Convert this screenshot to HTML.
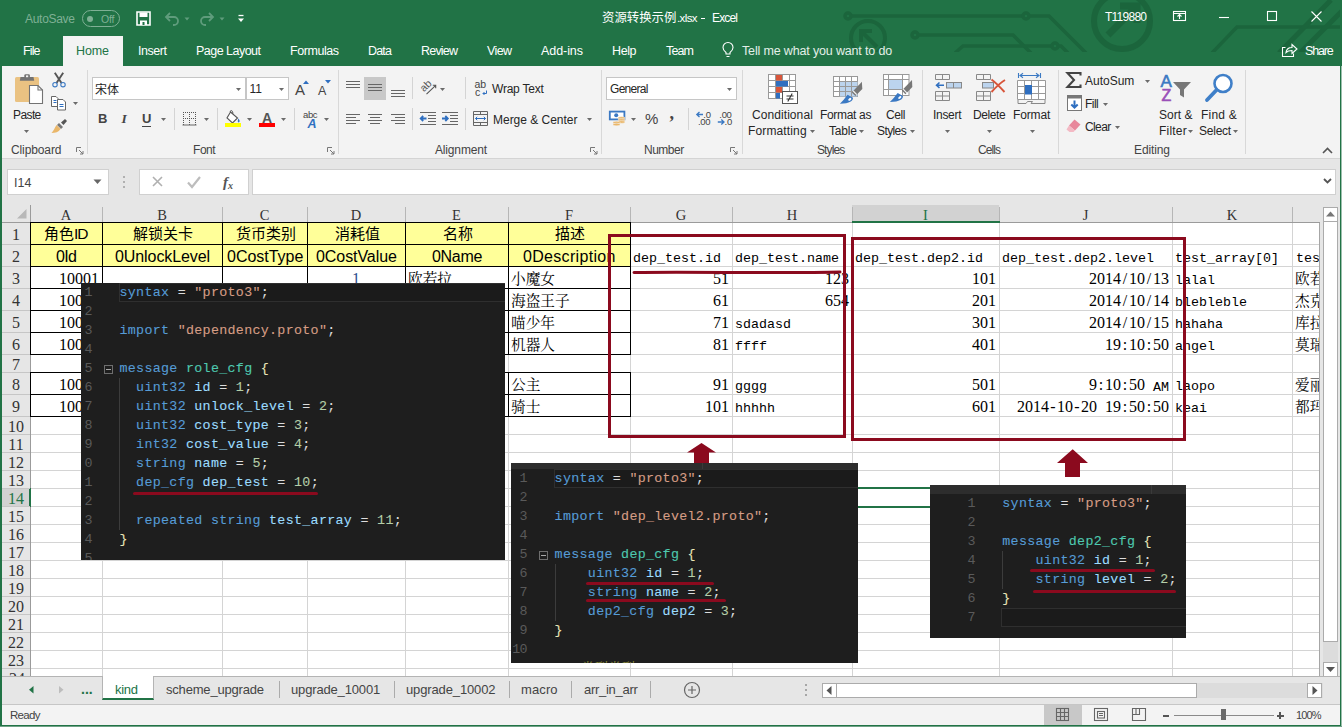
<!DOCTYPE html>
<html><head><meta charset="utf-8"><title>Excel</title><style>
html,body{margin:0;padding:0;}
body{width:1342px;height:727px;overflow:hidden;background:#e6e6e6;position:relative;font-family:"Liberation Sans",sans-serif;font-size:12px;color:#262626;}
body div{position:absolute;box-sizing:border-box;white-space:pre;}
svg{position:absolute;overflow:visible;}
.t{font-family:"Liberation Sans",sans-serif;font-size:12px;color:#262626;}
.w{font-family:"Liberation Sans",sans-serif;font-size:12px;color:#fff;}
.m{font-family:"Liberation Mono",monospace;font-size:13.333px;color:#000;}
.h{font-family:"Liberation Mono",monospace;font-size:13.33px;color:#444;}
.hs{font-family:"Liberation Serif",serif;font-size:16px;color:#333;}
.hc{font-family:"Liberation Serif",serif;font-size:14.5px;color:#333;}
.ds{font-family:"Liberation Serif",serif;font-size:16px;color:#000;}
.d{display:inline-block;width:8px;text-align:center;font-style:normal;}
.y{font-family:"Liberation Sans",sans-serif;font-size:16px;color:#000;text-align:center;}
.c{font-family:"Liberation Mono",monospace;font-size:13.333px;letter-spacing:0.31px;color:#dcdcdc;-webkit-text-stroke:0.1px currentColor;}
.c i{-webkit-text-stroke:0.1px currentColor;}
.c i{font-style:normal}
.k{color:#569cd6}.v{color:#9cdcfe}.n{color:#b5cea8}.s{color:#d69d85}.ty{color:#4ec9b0}.p{color:#dcdcdc}.b{color:#e8e4b8}
.ln{font-family:"Liberation Mono",monospace;font-size:13.333px;color:#5a5a5a;text-align:right;letter-spacing:-0.6px;}
</style></head><body>
<div style="left:0px;top:0px;width:1342px;height:66px;background:#217346;"></div>
<svg style="left:0;top:0;overflow:hidden" width="1342" height="52" viewBox="0 0 1342 52" fill="none" stroke="#1b653c" stroke-width="3.500">
<circle cx="848" cy="16" r="3"/><path d="M851 16 H1023"/><circle cx="1026" cy="16" r="3"/><path d="M1029 16 H1049 L1086 53"/>
<circle cx="915" cy="35" r="3"/><path d="M918 35 H1013 L1031 53"/>
<path d="M955 53 L963 46 H1052"/><circle cx="1055" cy="46" r="3"/><path d="M1058 46 H1061 L1068 53"/>
<circle cx="868" cy="38" r="17" stroke-width="4"/><path d="M877 47 L861 31 M861 42 V31 H872" stroke-width="4"/>
<circle cx="1122" cy="21" r="28" stroke-width="6"/><path d="M1108 35 L1134 9 M1120 6 H1137 V23" stroke-width="7"/>
<path d="M1212 53 L1237 27 H1342"/><path d="M1279 53 L1331 0" stroke-width="5"/><path d="M1300 53 L1342 11" stroke-width="5"/>
</svg>
<svg style="left:25.00px;top:8.50px" width="53.0" height="20"><text x="0" y="14.16" font-family="Liberation Sans, sans-serif" font-size="12" fill="#7fb095" textLength="50.0" lengthAdjust="spacing">AutoSave</text></svg>
<div style="left:82px;top:10px;width:38px;height:17px;border:1px solid #7fb095;border-radius:9px;"></div>
<div style="left:87px;top:15.5px;width:6px;height:6px;background:#7fb095;border-radius:3px;"></div>
<svg style="left:100.60px;top:8.50px" width="16.4" height="20"><text x="0" y="13.64" font-family="Liberation Sans, sans-serif" font-size="10.5" fill="#7fb095" textLength="13.4" lengthAdjust="spacing">Off</text></svg>
<svg style="left:136px;top:11px" width="15" height="15" viewBox="0 0 15 15"><path d="M1 1h13v13h-13z" fill="none" stroke="#fff" stroke-width="1.6"/><rect x="3.5" y="1.5" width="8" height="4.5" fill="#fff"/><rect x="4" y="9.5" width="7" height="4.5" fill="#fff"/><rect x="6.500" y="11" width="2" height="3" fill="#217346"/></svg>
<svg style="left:164px;top:11px" width="90" height="16" viewBox="0 0 90 16" fill="none" stroke="#5f9c7c" stroke-width="1.8">
<path d="M6 2 L2 6 L6 10 M2.5 6 H10 a4 4 0 0 1 0 8 H9"/>
<path d="M45 2 L49 6 L45 10 M48.500 6 H41 a4 4 0 0 0 0 8 H42"/>
<path d="M20.500 6.500 l2.500 3 l2.500 -3z" fill="#5f9c7c" stroke="none"/>
<path d="M55.500 6.500 l2.500 3 l2.500 -3z" fill="#5f9c7c" stroke="none"/>
<path d="M74.500 4.500 h5" stroke="#fff" stroke-width="1.3"/><path d="M74 7.500 l3 3.500 l3 -3.500z" fill="#fff" stroke="none"/>
</svg>
<svg style="left:601.70px;top:11.30px;" width="75.4" height="14.3" fill="#fff"><text x="0" y="10.91" font-family="Liberation Sans, Noto Sans CJK SC, sans-serif" font-size="12.4" fill="#ffffff">资源转换示例</text></svg>
<svg style="left:676.50px;top:7.50px" width="23.5" height="20"><text x="0" y="13.98" font-family="Liberation Sans, sans-serif" font-size="11.5" fill="#ffffff" textLength="20.5" lengthAdjust="spacing">.xlsx</text></svg>
<div style="left:701px;top:18px;width:4px;height:1px;background:#fff;"></div>
<svg style="left:712.30px;top:7.50px" width="28.9" height="20"><text x="0" y="14.16" font-family="Liberation Sans, sans-serif" font-size="12" fill="#ffffff" textLength="25.9" lengthAdjust="spacing">Excel</text></svg>
<svg style="left:1105.00px;top:7.00px" width="45.0" height="20"><text x="0" y="14.16" font-family="Liberation Sans, sans-serif" font-size="12" fill="#ffffff" textLength="42.0" lengthAdjust="spacing">T119880</text></svg>
<svg style="left:1170px;top:8px" width="160" height="18" viewBox="0 0 160 18" fill="none" stroke="#fff" stroke-width="1.1">
<rect x="3.5" y="3.500" width="12" height="9"/><path d="M3.500 5.500 h12 M9.500 11 v-4 M7.500 8.500 l2 -2 l2 2"/>
<path d="M49 9.500 h10"/>
<rect x="97.500" y="3.500" width="9" height="9"/>
<path d="M141.500 3.500 l10 10 M151.500 3.500 l-10 10"/>
</svg>
<div style="left:63px;top:36px;width:60px;height:30px;background:#f3f3f3;"></div>
<svg style="left:22.50px;top:40.50px" width="20.5" height="20"><text x="0" y="14.33" font-family="Liberation Sans, sans-serif" font-size="12.5" fill="#ffffff" textLength="17.5" lengthAdjust="spacing">File</text></svg>
<svg style="left:76.00px;top:40.50px" width="36.0" height="20"><text x="0" y="14.33" font-family="Liberation Sans, sans-serif" font-size="12.5" fill="#217346" textLength="33.0" lengthAdjust="spacing">Home</text></svg>
<svg style="left:138.00px;top:40.50px" width="32.0" height="20"><text x="0" y="14.33" font-family="Liberation Sans, sans-serif" font-size="12.5" fill="#ffffff" textLength="29.0" lengthAdjust="spacing">Insert</text></svg>
<svg style="left:196.00px;top:40.50px" width="68.0" height="20"><text x="0" y="14.33" font-family="Liberation Sans, sans-serif" font-size="12.5" fill="#ffffff" textLength="65.0" lengthAdjust="spacing">Page Layout</text></svg>
<svg style="left:290.00px;top:40.50px" width="52.0" height="20"><text x="0" y="14.33" font-family="Liberation Sans, sans-serif" font-size="12.5" fill="#ffffff" textLength="49.0" lengthAdjust="spacing">Formulas</text></svg>
<svg style="left:368.00px;top:40.50px" width="27.0" height="20"><text x="0" y="14.33" font-family="Liberation Sans, sans-serif" font-size="12.5" fill="#ffffff" textLength="24.0" lengthAdjust="spacing">Data</text></svg>
<svg style="left:421.00px;top:40.50px" width="40.0" height="20"><text x="0" y="14.33" font-family="Liberation Sans, sans-serif" font-size="12.5" fill="#ffffff" textLength="37.0" lengthAdjust="spacing">Review</text></svg>
<svg style="left:487.00px;top:40.50px" width="28.0" height="20"><text x="0" y="14.33" font-family="Liberation Sans, sans-serif" font-size="12.5" fill="#ffffff" textLength="25.0" lengthAdjust="spacing">View</text></svg>
<svg style="left:541.00px;top:40.50px" width="45.0" height="20"><text x="0" y="14.33" font-family="Liberation Sans, sans-serif" font-size="12.5" fill="#ffffff" textLength="42.0" lengthAdjust="spacing">Add-ins</text></svg>
<svg style="left:612.00px;top:40.50px" width="27.5" height="20"><text x="0" y="14.33" font-family="Liberation Sans, sans-serif" font-size="12.5" fill="#ffffff" textLength="24.5" lengthAdjust="spacing">Help</text></svg>
<svg style="left:666.40px;top:40.50px" width="31.0" height="20"><text x="0" y="14.33" font-family="Liberation Sans, sans-serif" font-size="12.5" fill="#ffffff" textLength="28.0" lengthAdjust="spacing">Team</text></svg>
<svg style="left:722px;top:42px" width="12" height="17" viewBox="0 0 12 17" fill="none" stroke="#fff" stroke-width="1.1"><path d="M4 12 v-1.500 c-2 -1.500 -3 -3 -3 -5 a5 5 0 0 1 10 0 c0 2 -1 3.500 -3 5 v1.500z M4.500 14.500 h3"/></svg>
<svg style="left:741.60px;top:40.50px" width="153.2" height="20"><text x="0" y="14.33" font-family="Liberation Sans, sans-serif" font-size="12.5" fill="#e3efe8" textLength="150.2" lengthAdjust="spacing">Tell me what you want to do</text></svg>
<svg style="left:1281px;top:42px" width="18" height="16" viewBox="0 0 18 16" fill="none" stroke="#fff" stroke-width="1.1"><path d="M4.500 5.500 h-3 v9 h11 v-3 M5 10.500 c0.500 -3.500 3 -5 6 -5 v-3 l5 4.500 l-5 4.500 v-3 c-3 0 -4.500 0.500 -6 2z"/></svg>
<svg style="left:1305.20px;top:40.50px" width="31.8" height="20"><text x="0" y="14.33" font-family="Liberation Sans, sans-serif" font-size="12.5" fill="#ffffff" textLength="28.8" lengthAdjust="spacing">Share</text></svg>
<div style="left:0px;top:66px;width:1342px;height:93px;background:#f3f3f3;border-bottom:1px solid #d4d4d4;"></div>
<div style="left:7px;top:169px;width:102px;height:26px;background:#fff;border:1px solid #d0d0d0;"></div>
<div class="t" style="left:14px;top:174.5px;height:16px;line-height:16px;color:#444;font-size:12.5px;">I14</div>
<svg style="left:93px;top:179px" width="9" height="6"><path d="M0.500 0.500 h8 l-4 4.500z" fill="#666"/></svg>
<div style="left:123px;top:176px;width:2px;height:2px;background:#b0b0b0;"></div>
<div style="left:123px;top:181px;width:2px;height:2px;background:#b0b0b0;"></div>
<div style="left:123px;top:186px;width:2px;height:2px;background:#b0b0b0;"></div>
<div style="left:139px;top:169px;width:110px;height:26px;background:#fff;border:1px solid #d0d0d0;"></div>
<svg style="left:139px;top:169px" width="109" height="25" fill="none"><path d="M14 8 l9 9 M23 8 l-9 9" stroke="#b0b0b0" stroke-width="1.6"/><path d="M49 13.500 l4 4.500 l8 -10" stroke="#bdbdbd" stroke-width="2.200"/></svg>
<div class="t" style="left:223px;top:174.0px;height:16px;line-height:16px;"><i style="font-family:'Liberation Serif',serif;font-size:15px;font-weight:bold;color:#555">f</i><i style="font-family:'Liberation Serif',serif;font-size:10px;font-weight:bold;color:#555;position:relative;top:2px">x</i></div>
<div style="left:252px;top:169px;width:1084px;height:26px;background:#fff;border:1px solid #d0d0d0;"></div>
<svg style="left:1323px;top:178px" width="9" height="7" fill="none"><path d="M1 1 l3.500 3.500 l3.500 -3.500" stroke="#555" stroke-width="1.800"/></svg>
<div style="left:0px;top:0px;width:2px;height:727px;background:#217346;z-index:50;"></div>
<div style="left:1340px;top:0px;width:2px;height:727px;background:#217346;z-index:50;"></div>
<div style="left:1341px;top:66px;width:1px;height:661px;background:#9dbfad;z-index:51;"></div>
<div style="left:0px;top:725px;width:1342px;height:2px;background:#217346;z-index:50;"></div>
<div style="left:0px;top:726px;width:1342px;height:1px;background:#6fa287;z-index:51;"></div>
<div style="left:87px;top:70px;width:1px;height:84px;background:#d8d8d8;"></div>
<div style="left:338px;top:70px;width:1px;height:84px;background:#d8d8d8;"></div>
<div style="left:601px;top:70px;width:1px;height:84px;background:#d8d8d8;"></div>
<div style="left:742px;top:70px;width:1px;height:84px;background:#d8d8d8;"></div>
<div style="left:922px;top:70px;width:1px;height:84px;background:#d8d8d8;"></div>
<div style="left:1058px;top:70px;width:1px;height:84px;background:#d8d8d8;"></div>
<div style="left:1245px;top:70px;width:1px;height:84px;background:#d8d8d8;"></div>
<svg style="left:11.00px;top:140.00px" width="53.5" height="20"><text x="0" y="14.16" font-family="Liberation Sans, sans-serif" font-size="12" fill="#444" textLength="50.5" lengthAdjust="spacing">Clipboard</text></svg>
<svg style="left:76.0px;top:147.0px" width="8" height="8" fill="none" stroke="#777" stroke-width="1"><path d="M0.500 5 v-4.500 h4.500"/><path d="M3 3 l4 4 M7 4 v3 h-3"/></svg>
<svg style="left:192.80px;top:140.00px" width="25.7" height="20"><text x="0" y="14.16" font-family="Liberation Sans, sans-serif" font-size="12" fill="#444" textLength="22.7" lengthAdjust="spacing">Font</text></svg>
<svg style="left:326.5px;top:147.0px" width="8" height="8" fill="none" stroke="#777" stroke-width="1"><path d="M0.500 5 v-4.500 h4.500"/><path d="M3 3 l4 4 M7 4 v3 h-3"/></svg>
<svg style="left:435.40px;top:140.00px" width="55.1" height="20"><text x="0" y="14.16" font-family="Liberation Sans, sans-serif" font-size="12" fill="#444" textLength="52.1" lengthAdjust="spacing">Alignment</text></svg>
<svg style="left:590.0px;top:147.0px" width="8" height="8" fill="none" stroke="#777" stroke-width="1"><path d="M0.500 5 v-4.500 h4.500"/><path d="M3 3 l4 4 M7 4 v3 h-3"/></svg>
<svg style="left:643.80px;top:140.00px" width="43.2" height="20"><text x="0" y="14.16" font-family="Liberation Sans, sans-serif" font-size="12" fill="#444" textLength="40.2" lengthAdjust="spacing">Number</text></svg>
<svg style="left:730.0px;top:147.0px" width="8" height="8" fill="none" stroke="#777" stroke-width="1"><path d="M0.500 5 v-4.500 h4.500"/><path d="M3 3 l4 4 M7 4 v3 h-3"/></svg>
<svg style="left:817.30px;top:140.00px" width="31.2" height="20"><text x="0" y="14.16" font-family="Liberation Sans, sans-serif" font-size="12" fill="#444" textLength="28.2" lengthAdjust="spacing">Styles</text></svg>
<svg style="left:978.40px;top:140.00px" width="26.1" height="20"><text x="0" y="14.16" font-family="Liberation Sans, sans-serif" font-size="12" fill="#444" textLength="23.1" lengthAdjust="spacing">Cells</text></svg>
<svg style="left:1133.60px;top:140.00px" width="39.0" height="20"><text x="0" y="14.16" font-family="Liberation Sans, sans-serif" font-size="12" fill="#444" textLength="36.0" lengthAdjust="spacing">Editing</text></svg>
<svg style="left:1322px;top:147px" width="11" height="7" fill="none" stroke="#555" stroke-width="1.600"><path d="M1 6 l4.500 -4.500 l4.500 4.500"/></svg>
<svg style="left:14px;top:73px" width="30" height="32" viewBox="0 0 30 32">
<rect x="1" y="4" width="24" height="25" rx="1.500" fill="#eac282"/>
<path d="M6.500 4 h13 l0.700 3.800 h-14.400z" fill="#737373"/><rect x="10.300" y="1.200" width="5.600" height="4" rx="1.200" fill="#737373"/><rect x="12" y="2.400" width="2.200" height="1.800" fill="#f3f3f3"/>
<path d="M15.500 12.500 h8.500 l4.500 4.500 v13.500 h-13z" fill="#fff" stroke="#737373" stroke-width="1.100"/><path d="M24 12.500 v4.500 h4.500" fill="none" stroke="#737373" stroke-width="1.100"/>
</svg>
<svg style="left:13.00px;top:105.00px" width="31.3" height="20"><text x="0" y="14.16" font-family="Liberation Sans, sans-serif" font-size="12" fill="#262626" textLength="28.3" lengthAdjust="spacing">Paste</text></svg>
<svg style="left:24.3px;top:129.5px" width="5" height="3"><path d="M0 0 h5 l-2.500 3z" fill="#6a6a6a"/></svg>
<svg style="left:51px;top:72px" width="16" height="17" viewBox="0 0 16 17" fill="none">
<path d="M3.800 0.800 L10.500 11 M12.200 0.800 L5.500 11" stroke="#555" stroke-width="1.900"/>
<circle cx="4" cy="12.700" r="2.200" stroke="#3b79c3" stroke-width="1.100"/><circle cx="12" cy="12.700" r="2.200" stroke="#3b79c3" stroke-width="1.100"/></svg>
<svg style="left:51px;top:96px" width="16" height="15" viewBox="0 0 16 15" fill="#fff" stroke="#666" stroke-width="1">
<path d="M0.500 0.500 h4.500 l2 2 v8 h-6.500z"/><path d="M2.500 4.500 h3 M2.500 6.500 h3" stroke="#2f6fc0"/><path d="M6.500 3.500 h5.500 l2.500 2.500 v8 h-8z"/><path d="M8.500 8.500 h4 M8.500 10.500 h4" stroke="#2f6fc0"/></svg>
<svg style="left:73.1px;top:102.0px" width="5" height="3"><path d="M0 0 h5 l-2.500 3z" fill="#6a6a6a"/></svg>
<svg style="left:51px;top:118px" width="17" height="16" viewBox="0 0 17 16">
<path d="M10 4.500 l4 -3.500 l2 2 l-3.500 4z" fill="#555"/><path d="M8 5 l4 4 l-2 2 l-4 -4z" fill="#777"/>
<path d="M5.500 7 l4 4 c-2 3 -5 4 -9 4 c2 -2 3 -5 5 -8z" fill="#eab76a"/></svg>
<div style="left:92px;top:77px;width:154px;height:23px;background:#fff;border:1px solid #c6c6c6;"></div>
<svg style="left:95.00px;top:83.00px;" width="25.0" height="13.8" fill="#262626"><text x="0" y="10.56" font-family="Liberation Sans, Noto Sans CJK SC, sans-serif" font-size="12" fill="#262626">宋体</text></svg>
<svg style="left:235.5px;top:87.5px" width="5" height="3"><path d="M0 0 h5 l-2.500 3z" fill="#6a6a6a"/></svg>
<div style="left:245.5px;top:77px;width:43px;height:23px;background:#fff;border:1px solid #c6c6c6;"></div>
<div class="t" style="left:249.5px;top:81.0px;height:16px;line-height:16px;font-size:12px;">11</div>
<svg style="left:278.5px;top:87.5px" width="5" height="3"><path d="M0 0 h5 l-2.500 3z" fill="#6a6a6a"/></svg>
<div class="t" style="left:295px;top:81.5px;height:16px;line-height:16px;font-size:15px;color:#444;">A</div>
<svg style="left:303px;top:80px" width="6" height="4"><path d="M0 4 h6 l-3 -3.500z" fill="#2f6fc0"/></svg>
<div class="t" style="left:318px;top:82.5px;height:16px;line-height:16px;font-size:12.500px;color:#444;">A</div>
<svg style="left:325px;top:80px" width="6" height="4"><path d="M0 0 h6 l-3 3.500z" fill="#2f6fc0"/></svg>
<div class="t" style="left:98px;top:111.0px;height:16px;line-height:16px;font-size:13px;font-weight:bold;color:#444;">B</div>
<div class="t" style="left:121.5px;top:111.0px;height:16px;line-height:16px;font-size:13.500px;font-style:italic;font-weight:bold;font-family:'Liberation Serif',serif;color:#444;">I</div>
<div class="t" style="left:142px;top:110.5px;height:16px;line-height:16px;font-size:13px;font-weight:bold;color:#444;">U</div>
<div style="left:142px;top:125.5px;width:9px;height:1.2px;background:#444;"></div>
<svg style="left:160.5px;top:118.0px" width="5" height="3"><path d="M0 0 h5 l-2.500 3z" fill="#6a6a6a"/></svg>
<div style="left:174px;top:108px;width:1px;height:22px;background:#d4d4d4;"></div>
<svg style="left:182px;top:111px" width="15" height="15" viewBox="0 0 15 15" fill="none" stroke="#555" stroke-width="1" stroke-dasharray="1 1"><path d="M1 1.500 h13 M1 7.500 h13 M1.500 1 v13 M7.500 1 v13 M13.500 1 v13"/><path d="M0.500 14 h14" stroke-dasharray="none" stroke="#666"/></svg>
<svg style="left:204.0px;top:118.0px" width="5" height="3"><path d="M0 0 h5 l-2.500 3z" fill="#6a6a6a"/></svg>
<div style="left:217px;top:108px;width:1px;height:22px;background:#d4d4d4;"></div>
<svg style="left:225px;top:110px" width="18" height="18" viewBox="0 0 18 18"><path d="M5.500 2 l7 6 l-5 5 l-5.500 -5z" fill="#fff" stroke="#555" stroke-width="1.100"/><path d="M5.500 2 c-1 -1.500 1.500 -2 2 -0.500 l0.500 2" fill="none" stroke="#555"/><path d="M13.500 8.500 c1.500 2 1.500 3.500 0 4 c-1 -0.500 -1 -2 0 -4z" fill="#2f6fc0"/><rect x="0" y="13" width="16" height="4" fill="#ffff00"/></svg>
<svg style="left:246.5px;top:118.0px" width="5" height="3"><path d="M0 0 h5 l-2.500 3z" fill="#6a6a6a"/></svg>
<div class="t" style="left:262px;top:109.5px;height:16px;line-height:16px;font-size:14px;font-weight:bold;color:#555;">A</div>
<div style="left:259px;top:123px;width:16px;height:4px;background:#ff0000;"></div>
<svg style="left:280.9px;top:118.0px" width="5" height="3"><path d="M0 0 h5 l-2.500 3z" fill="#6a6a6a"/></svg>
<div style="left:294px;top:108px;width:1px;height:22px;background:#d4d4d4;"></div>
<div class="t" style="left:303px;top:106.5px;height:16px;line-height:16px;font-size:9.500px;letter-spacing:-0.400px;color:#444;">abc</div>
<div class="t" style="left:307.5px;top:116.0px;height:16px;line-height:16px;font-size:12.500px;font-style:italic;font-weight:bold;color:#2f6fc0;">A</div>
<svg style="left:323.5px;top:118.0px" width="5" height="3"><path d="M0 0 h5 l-2.500 3z" fill="#6a6a6a"/></svg>
<svg style="left:346px;top:80.5px" width="15" height="9"><rect x="0" y="0" width="14" height="1" fill="#666"/><rect x="0" y="3" width="14" height="1" fill="#666"/><rect x="0" y="6" width="14" height="1" fill="#666"/></svg>
<div style="left:364px;top:77px;width:22px;height:23px;background:#c8c8c8;"></div>
<svg style="left:368px;top:84px" width="15" height="9"><rect x="0" y="0" width="14" height="1" fill="#666"/><rect x="0" y="3" width="14" height="1" fill="#666"/><rect x="0" y="6" width="14" height="1" fill="#666"/></svg>
<svg style="left:390.5px;top:89.5px" width="15" height="9"><rect x="0" y="0" width="14" height="1" fill="#666"/><rect x="0" y="3" width="14" height="1" fill="#666"/><rect x="0" y="6" width="14" height="1" fill="#666"/></svg>
<div style="left:412px;top:77px;width:1px;height:22px;background:#d4d4d4;"></div>
<svg style="left:419px;top:78px" width="19" height="20" viewBox="0 0 19 20" fill="none"><text x="0" y="0" font-family="Liberation Sans" font-size="10.500" fill="#555" transform="translate(5 14.300) rotate(-45)">ab</text><path d="M7.500 16.200 L16.700 7.300 M13.800 7.300 h2.900 v2.900" stroke="#555" stroke-width="1.100"/></svg>
<svg style="left:439.9px;top:88.0px" width="5" height="3"><path d="M0 0 h5 l-2.500 3z" fill="#6a6a6a"/></svg>
<div style="left:465px;top:77px;width:1px;height:22px;background:#d4d4d4;"></div>
<div class="t" style="left:474.5px;top:76.0px;height:16px;line-height:16px;font-size:10.500px;color:#444;letter-spacing:-0.2px;">ab</div>
<div class="t" style="left:475px;top:84.0px;height:16px;line-height:16px;font-size:10.500px;color:#444;">c</div>
<svg style="left:481.5px;top:89.5px" width="6" height="6" fill="none" stroke="#2f6fc0" stroke-width="1"><path d="M4.500 0.500 v3 h-3.500 M2.500 2 l-1.500 1.500 l1.500 1.500"/></svg>
<svg style="left:492.00px;top:78.80px" width="54.8" height="20"><text x="0" y="14.16" font-family="Liberation Sans, sans-serif" font-size="12" fill="#262626" textLength="51.8" lengthAdjust="spacing">Wrap Text</text></svg>
<svg style="left:346px;top:113.5px" width="15" height="12"><rect x="0" y="0" width="14" height="1" fill="#666"/><rect x="0" y="3" width="10" height="1" fill="#666"/><rect x="0" y="6" width="14" height="1" fill="#666"/><rect x="0" y="9" width="10" height="1" fill="#666"/></svg>
<svg style="left:368px;top:113.5px" width="15" height="12"><rect x="0" y="0" width="14" height="1" fill="#666"/><rect x="2" y="3" width="10" height="1" fill="#666"/><rect x="0" y="6" width="14" height="1" fill="#666"/><rect x="2" y="9" width="10" height="1" fill="#666"/></svg>
<svg style="left:390.5px;top:113.5px" width="15" height="12"><rect x="0" y="0" width="14" height="1" fill="#666"/><rect x="4" y="3" width="10" height="1" fill="#666"/><rect x="0" y="6" width="14" height="1" fill="#666"/><rect x="4" y="9" width="10" height="1" fill="#666"/></svg>
<div style="left:412px;top:108px;width:1px;height:22px;background:#d4d4d4;"></div>
<svg style="left:420px;top:112px" width="40" height="14" viewBox="0 0 40 14" fill="none"><path d="M0 0.500 h16 M8 3.500 h8 M8 6.500 h8 M8 9.500 h8 M0 12.500 h16 M22 0.500 h16 M30 3.500 h8 M30 6.500 h8 M30 9.500 h8 M22 12.500 h16" stroke="#666"/><path d="M6.500 6.500 h-5.500 M3.200 4 l-2.500 2.500 l2.500 2.500 M22 6.500 h5.500 M25.300 4 l2.500 2.500 l-2.500 2.500" stroke="#2f6fc0" stroke-width="1.800"/></svg>
<div style="left:465px;top:108px;width:1px;height:22px;background:#d4d4d4;"></div>
<svg style="left:473px;top:111px" width="15" height="15" viewBox="0 0 15 15" fill="none" stroke="#666" stroke-width="1"><path d="M0.500 0.500 h14 v14 h-14z M0.500 3.500 h14 M0.500 11.500 h14 M7.500 0.500 v3 M7.500 11.500 v3"/><path d="M2.500 7.500 h10 M4.200 5.800 l-1.700 1.700 l1.700 1.700 M10.800 5.800 l1.700 1.700 l-1.700 1.700" stroke="#2f6fc0"/></svg>
<svg style="left:492.50px;top:109.50px" width="87.5" height="20"><text x="0" y="14.16" font-family="Liberation Sans, sans-serif" font-size="12" fill="#262626" textLength="84.5" lengthAdjust="spacing">Merge &amp; Center</text></svg>
<svg style="left:586.9px;top:118.0px" width="5" height="3"><path d="M0 0 h5 l-2.500 3z" fill="#6a6a6a"/></svg>
<div style="left:606px;top:77px;width:131px;height:23px;background:#fff;border:1px solid #c6c6c6;"></div>
<svg style="left:609.50px;top:79.00px" width="41.5" height="20"><text x="0" y="14.16" font-family="Liberation Sans, sans-serif" font-size="12" fill="#262626" textLength="38.5" lengthAdjust="spacing">General</text></svg>
<svg style="left:726.9px;top:87.5px" width="5" height="3"><path d="M0 0 h5 l-2.500 3z" fill="#6a6a6a"/></svg>
<svg style="left:608px;top:110px" width="19" height="18" viewBox="0 0 19 18"><rect x="1.800" y="1.600" width="14.600" height="7.800" fill="#fff" stroke="#3b79c3" stroke-width="1.800"/><circle cx="8.200" cy="5.300" r="2" fill="#3b79c3"/>
<g fill="#eab76a" stroke="#f3f3f3" stroke-width="0.500"><ellipse cx="13.500" cy="8" rx="3.600" ry="1.300"/><ellipse cx="13.500" cy="10" rx="3.600" ry="1.300"/><ellipse cx="13.500" cy="12" rx="3.600" ry="1.300"/><ellipse cx="8.500" cy="12.500" rx="3.500" ry="1.300"/><ellipse cx="8.500" cy="14.500" rx="3.500" ry="1.300"/></g></svg>
<svg style="left:630.8px;top:118.0px" width="5" height="3"><path d="M0 0 h5 l-2.500 3z" fill="#6a6a6a"/></svg>
<div class="t" style="left:645px;top:111.0px;height:16px;line-height:16px;font-size:15px;color:#444;">%</div>
<div class="t" style="left:669.5px;top:104.5px;height:16px;line-height:16px;font-size:18px;font-weight:bold;color:#444;font-family:'Liberation Serif',serif;">,</div>
<div style="left:688px;top:108px;width:1px;height:22px;background:#d4d4d4;"></div>
<svg style="left:696px;top:111px" width="38" height="16" viewBox="0 0 38 16" fill="none"><text x="7.300" y="6.500" font-family="Liberation Sans" font-size="9.500" fill="#444" letter-spacing="-0.300">.0</text><text x="2" y="14" font-family="Liberation Sans" font-size="9.500" fill="#444" letter-spacing="-0.300">.00</text><path d="M7 3.500 h-6 M3.500 1 l-2.700 2.500 l2.700 2.500" stroke="#3b79c3" stroke-width="1.300"/>
<text x="23.300" y="6.500" font-family="Liberation Sans" font-size="9.500" fill="#444" letter-spacing="-0.300">.00</text><text x="28.600" y="14" font-family="Liberation Sans" font-size="9.500" fill="#444" letter-spacing="-0.300">.0</text><path d="M21.800 11 h6 M25.300 8.500 l2.700 2.500 l-2.700 2.500" stroke="#3b79c3" stroke-width="1.300"/></svg>
<svg style="left:768px;top:74px" width="31" height="31" viewBox="0 0 31 31"><rect x="0.500" y="0.500" width="27" height="24" fill="#fff" stroke="#999"/><path d="M0.500 6.500 h27 M0.500 12.500 h27 M0.500 18.500 h27 M7.500 0.500 v24 M14.500 0.500 v24 M21.500 0.500 v24" stroke="#999" fill="none"/>
<rect x="8" y="1" width="6" height="5.500" fill="#d8553a"/><rect x="8" y="7" width="12" height="5.500" fill="#2f6fc0"/><rect x="8" y="13" width="6" height="5.500" fill="#d8553a"/><rect x="8" y="19" width="4" height="5.500" fill="#2f6fc0"/>
<rect x="14.500" y="17.500" width="15" height="12" fill="#fff" stroke="#555"/><path d="M18.500 22 h7 M18.500 25 h7 M24.200 19.500 l-4.400 8" stroke="#333" stroke-width="1.100" fill="none"/></svg>
<svg style="left:751.50px;top:105.00px" width="63.8" height="20"><text x="0" y="14.16" font-family="Liberation Sans, sans-serif" font-size="12" fill="#262626" textLength="60.8" lengthAdjust="spacing">Conditional</text></svg>
<svg style="left:748.00px;top:121.00px" width="61.6" height="20"><text x="0" y="14.16" font-family="Liberation Sans, sans-serif" font-size="12" fill="#262626" textLength="58.6" lengthAdjust="spacing">Formatting</text></svg>
<svg style="left:809.8px;top:130.0px" width="5" height="3"><path d="M0 0 h5 l-2.500 3z" fill="#6a6a6a"/></svg>
<svg style="left:833px;top:76px" width="31" height="30" viewBox="0 0 31 30"><rect x="0.500" y="0.500" width="24" height="20" fill="#fff" stroke="#999"/><rect x="6.500" y="5.500" width="18" height="15" fill="#bcd4ee"/><path d="M0.500 5.500 h24 M0.500 10.500 h24 M0.500 15.500 h24 M6.500 0.500 v20 M12.500 0.500 v20 M18.500 0.500 v20" stroke="#999" fill="none"/>
<path d="M28.900 5.700 L29.300 12.900 L22.400 20 L18.800 16.400z" fill="#777"/><path d="M20.200 15 l3.600 3.600" stroke="#f3f3f3" stroke-width="1.200"/><path d="M14.600 18.800 L20 21.800 C20 25 17 27.500 6.900 27.800 C10 25 12 22 14.600 18.800z" fill="#3b79c3"/><ellipse cx="16.800" cy="23.300" rx="1.800" ry="1.100" fill="#fff" transform="rotate(-40 16.800 23.300)"/></svg>
<svg style="left:820.30px;top:105.00px" width="54.4" height="20"><text x="0" y="14.16" font-family="Liberation Sans, sans-serif" font-size="12" fill="#262626" textLength="51.4" lengthAdjust="spacing">Format as</text></svg>
<svg style="left:829.00px;top:121.00px" width="31.0" height="20"><text x="0" y="14.16" font-family="Liberation Sans, sans-serif" font-size="12" fill="#262626" textLength="28.0" lengthAdjust="spacing">Table</text></svg>
<svg style="left:859.0px;top:130.0px" width="5" height="3"><path d="M0 0 h5 l-2.500 3z" fill="#6a6a6a"/></svg>
<svg style="left:883px;top:74px" width="31" height="30" viewBox="0 0 31 30"><rect x="0.500" y="0.500" width="25.500" height="21" fill="#fff" stroke="#999"/><path d="M0.500 5.500 h25.500 M0.500 15.500 h25.500 M5.500 0.500 v21 M19.500 0.500 v21" stroke="#999" fill="none"/><rect x="6" y="6" width="13" height="9" fill="#bcd4ee"/>
<path d="M29 5.900 L29.300 13.100 L22.400 20.200 L18.800 16.600z" fill="#777"/><path d="M20.200 15.200 l3.600 3.600" stroke="#f3f3f3" stroke-width="1.200"/><path d="M14.700 19 L20 22 C20 25.200 17 27.700 6.900 28 C10 25.200 12 22.200 14.700 19z" fill="#3b79c3"/><ellipse cx="16.800" cy="23.500" rx="1.800" ry="1.100" fill="#fff" transform="rotate(-40 16.800 23.500)"/></svg>
<svg style="left:886.00px;top:105.00px" width="22.5" height="20"><text x="0" y="14.16" font-family="Liberation Sans, sans-serif" font-size="12" fill="#262626" textLength="19.5" lengthAdjust="spacing">Cell</text></svg>
<svg style="left:877.00px;top:121.00px" width="32.7" height="20"><text x="0" y="14.16" font-family="Liberation Sans, sans-serif" font-size="12" fill="#262626" textLength="29.7" lengthAdjust="spacing">Styles</text></svg>
<svg style="left:909.5px;top:130.0px" width="5" height="3"><path d="M0 0 h5 l-2.500 3z" fill="#6a6a6a"/></svg>
<svg style="left:935px;top:74px" width="27" height="28" viewBox="0 0 27 28" fill="none"><path d="M0.500 0.500 h14 v5 h-14z M7.500 0.500 v5" stroke="#888"/><path d="M0.500 17.500 h14 v9 h-14z M7.500 17.500 v9 M0.500 22 h14" stroke="#888"/><rect x="11.500" y="8.500" width="15" height="5.500" fill="#bcd4ee" stroke="#888"/><path d="M18.500 8.500 v5.500" stroke="#888"/><path d="M9 11.200 h-7 M4.500 8.500 l-3 2.700 l3 2.700" stroke="#2f6fc0" stroke-width="1.500"/></svg>
<svg style="left:933.30px;top:105.00px" width="31.5" height="20"><text x="0" y="14.16" font-family="Liberation Sans, sans-serif" font-size="12" fill="#262626" textLength="28.5" lengthAdjust="spacing">Insert</text></svg>
<svg style="left:945.1px;top:130.0px" width="5" height="3"><path d="M0 0 h5 l-2.500 3z" fill="#6a6a6a"/></svg>
<svg style="left:976px;top:74px" width="30" height="28" viewBox="0 0 30 28" fill="none"><path d="M0.500 0.500 h14 v5 h-14z M7.500 0.500 v5" stroke="#888"/><path d="M0.500 17.500 h14 v9 h-14z M7.500 17.500 v9 M0.500 22 h14" stroke="#888"/><rect x="6.500" y="8.500" width="11" height="5.500" fill="#bcd4ee" stroke="#888"/><path d="M15.500 5.500 c4 3 8 7 13 12.500 M29 6 c-5 3 -9 7 -13.500 12" stroke="#d8553a" stroke-width="1.900"/></svg>
<svg style="left:973.30px;top:105.00px" width="35.6" height="20"><text x="0" y="14.16" font-family="Liberation Sans, sans-serif" font-size="12" fill="#262626" textLength="32.6" lengthAdjust="spacing">Delete</text></svg>
<svg style="left:986.9px;top:130.0px" width="5" height="3"><path d="M0 0 h5 l-2.500 3z" fill="#6a6a6a"/></svg>
<svg style="left:1017px;top:72px" width="30" height="33" viewBox="0 0 30 33" fill="none"><path d="M1.500 1 v5 M23.500 1 v5 M3 3.500 h19 M6 1.300 l-3 2.200 l3 2.200 M19 1.300 l3 2.200 l-3 2.200" stroke="#3b79c3" stroke-width="1.100"/><path d="M0.500 8.500 h28 v19 h-28z M0.500 14.500 h28 M0.500 21.500 h28 M7.500 8.500 v19 M14.500 8.500 v19 M21.500 8.500 v19" stroke="#999" fill="#fff"/><rect x="8" y="13" width="7" height="9.500" fill="#2f6fc0"/><path d="M1 28 v3.500 h8 l1.500 -2 h5 l-1.500 2 h14 v-3.500" stroke="#888"/></svg>
<svg style="left:1013.40px;top:105.00px" width="40.3" height="20"><text x="0" y="14.16" font-family="Liberation Sans, sans-serif" font-size="12" fill="#262626" textLength="37.3" lengthAdjust="spacing">Format</text></svg>
<svg style="left:1029.7px;top:130.0px" width="5" height="3"><path d="M0 0 h5 l-2.500 3z" fill="#6a6a6a"/></svg>
<svg style="left:1066px;top:72px" width="16" height="16" viewBox="0 0 16 16" fill="none"><path d="M14.500 3.500 v-2.500 h-13 l6.500 7 l-6.500 7 h13 v-2.500" stroke="#444" stroke-width="2.100"/></svg>
<svg style="left:1085.30px;top:71.00px" width="52.3" height="20"><text x="0" y="14.16" font-family="Liberation Sans, sans-serif" font-size="12" fill="#262626" textLength="49.3" lengthAdjust="spacing">AutoSum</text></svg>
<svg style="left:1144.5px;top:80.0px" width="5" height="3"><path d="M0 0 h5 l-2.500 3z" fill="#6a6a6a"/></svg>
<svg style="left:1067px;top:95px" width="15" height="16" viewBox="0 0 15 16" fill="none"><rect x="0.500" y="0.500" width="14" height="15" fill="#fff" stroke="#777"/><rect x="0.500" y="0.500" width="14" height="3" fill="#777"/><path d="M7.500 5.500 v7 M4.300 9.500 l3.200 3.200 l3.200 -3.200" stroke="#2f6fc0" stroke-width="2"/></svg>
<svg style="left:1085.30px;top:93.50px" width="16.7" height="20"><text x="0" y="14.16" font-family="Liberation Sans, sans-serif" font-size="12" fill="#262626" textLength="13.7" lengthAdjust="spacing">Fill</text></svg>
<svg style="left:1102.8px;top:102.5px" width="5" height="3"><path d="M0 0 h5 l-2.500 3z" fill="#6a6a6a"/></svg>
<svg style="left:1066px;top:119px" width="15" height="14" viewBox="0 0 15 14"><path d="M8.500 0.500 l6 5 l-5.500 6 l-6 -5z" fill="#e8879b"/><path d="M3 6.500 l6 5 l-1.500 1.500 h-4 l-3 -2.500z" fill="#f3b9c4"/></svg>
<svg style="left:1085.30px;top:116.50px" width="29.2" height="20"><text x="0" y="14.16" font-family="Liberation Sans, sans-serif" font-size="12" fill="#262626" textLength="26.2" lengthAdjust="spacing">Clear</text></svg>
<svg style="left:1115.3px;top:125.5px" width="5" height="3"><path d="M0 0 h5 l-2.500 3z" fill="#6a6a6a"/></svg>
<svg style="left:1161px;top:74px" width="31" height="29" viewBox="0 0 31 29"><text x="-0.500" y="13" font-family="Liberation Sans" font-size="17" fill="#3b79c3" stroke="#3b79c3" stroke-width="0.600">A</text><text x="0.500" y="27" font-family="Liberation Sans" font-size="16" fill="#9a4fb8" stroke="#9a4fb8" stroke-width="0.600">Z</text><path d="M12 8 h18 l-7 7.500 v8 l-4 -2.500 v-5.500z" fill="#777"/></svg>
<svg style="left:1159.00px;top:105.00px" width="36.4" height="20"><text x="0" y="14.16" font-family="Liberation Sans, sans-serif" font-size="12" fill="#262626" textLength="33.4" lengthAdjust="spacing">Sort &amp;</text></svg>
<svg style="left:1159.00px;top:121.00px" width="30.7" height="20"><text x="0" y="14.16" font-family="Liberation Sans, sans-serif" font-size="12" fill="#262626" textLength="27.7" lengthAdjust="spacing">Filter</text></svg>
<svg style="left:1188.3px;top:130.0px" width="5" height="3"><path d="M0 0 h5 l-2.500 3z" fill="#6a6a6a"/></svg>
<svg style="left:1204px;top:73px" width="30" height="30" viewBox="0 0 30 30" fill="none"><circle cx="19" cy="10.500" r="8.500" stroke="#3f7fc8" stroke-width="2.600" fill="#fff"/><path d="M12.500 17 l-9.500 10" stroke="#3f7fc8" stroke-width="3.800" stroke-linecap="round"/></svg>
<svg style="left:1201.00px;top:105.00px" width="38.7" height="20"><text x="0" y="14.16" font-family="Liberation Sans, sans-serif" font-size="12" fill="#262626" textLength="35.7" lengthAdjust="spacing">Find &amp;</text></svg>
<svg style="left:1199.00px;top:121.00px" width="35.2" height="20"><text x="0" y="14.16" font-family="Liberation Sans, sans-serif" font-size="12" fill="#262626" textLength="32.2" lengthAdjust="spacing">Select</text></svg>
<svg style="left:1233.0px;top:130.0px" width="5" height="3"><path d="M0 0 h5 l-2.500 3z" fill="#6a6a6a"/></svg>
<div style="left:30px;top:223px;width:1290px;height:453px;background:#fff;"></div>
<div style="left:2px;top:205px;width:1318px;height:18px;background:#e6e6e6;"></div>
<div style="left:2px;top:223px;width:28px;height:453px;background:#e6e6e6;"></div>
<div style="left:852px;top:205px;width:147px;height:17px;background:#d2d2d2;"></div>
<div style="left:2px;top:489px;width:28px;height:17px;background:#d2d2d2;"></div>
<div style="left:2px;top:222px;width:1318px;height:1px;background:#9b9b9b;"></div>
<div style="left:30px;top:205px;width:1px;height:471px;background:#9b9b9b;"></div>
<div style="left:102px;top:207px;width:1px;height:15px;background:#b6b6b6;"></div>
<div style="left:222px;top:207px;width:1px;height:15px;background:#b6b6b6;"></div>
<div style="left:307px;top:207px;width:1px;height:15px;background:#b6b6b6;"></div>
<div style="left:405px;top:207px;width:1px;height:15px;background:#b6b6b6;"></div>
<div style="left:508px;top:207px;width:1px;height:15px;background:#b6b6b6;"></div>
<div style="left:630px;top:207px;width:1px;height:15px;background:#b6b6b6;"></div>
<div style="left:732px;top:207px;width:1px;height:15px;background:#b6b6b6;"></div>
<div style="left:852px;top:207px;width:1px;height:15px;background:#b6b6b6;"></div>
<div style="left:999px;top:207px;width:1px;height:15px;background:#b6b6b6;"></div>
<div style="left:1172px;top:207px;width:1px;height:15px;background:#b6b6b6;"></div>
<div style="left:1292px;top:207px;width:1px;height:15px;background:#b6b6b6;"></div>
<div style="left:852px;top:221px;width:148px;height:2px;background:#217346;"></div>
<div style="left:29px;top:488px;width:2px;height:19px;background:#217346;"></div>
<svg style="left:17px;top:209px" width="10" height="10"><path d="M9.500 0 v9.500 h-9.500z" fill="#b8b8b8"/></svg>
<div class="hc" style="left:46.0px;top:205.5px;height:18px;line-height:18px;width:40px;text-align:center;">A</div>
<div class="hc" style="left:142.0px;top:205.5px;height:18px;line-height:18px;width:40px;text-align:center;">B</div>
<div class="hc" style="left:244.5px;top:205.5px;height:18px;line-height:18px;width:40px;text-align:center;">C</div>
<div class="hc" style="left:336.0px;top:205.5px;height:18px;line-height:18px;width:40px;text-align:center;">D</div>
<div class="hc" style="left:436.5px;top:205.5px;height:18px;line-height:18px;width:40px;text-align:center;">E</div>
<div class="hc" style="left:549.0px;top:205.5px;height:18px;line-height:18px;width:40px;text-align:center;">F</div>
<div class="hc" style="left:661.0px;top:205.5px;height:18px;line-height:18px;width:40px;text-align:center;">G</div>
<div class="hc" style="left:772.0px;top:205.5px;height:18px;line-height:18px;width:40px;text-align:center;">H</div>
<div class="hc" style="left:905.5px;top:205.5px;height:18px;line-height:18px;width:40px;text-align:center;color:#217346;">I</div>
<div class="hc" style="left:1065.5px;top:205.5px;height:18px;line-height:18px;width:40px;text-align:center;">J</div>
<div class="hc" style="left:1212.0px;top:205.5px;height:18px;line-height:18px;width:40px;text-align:center;">K</div>
<div style="left:2px;top:244px;width:28px;height:1px;background:#c6c6c6;"></div>
<div style="left:31px;top:244px;width:1289px;height:1px;background:#d4d4d4;"></div>
<div style="left:2px;top:266px;width:28px;height:1px;background:#c6c6c6;"></div>
<div style="left:31px;top:266px;width:1289px;height:1px;background:#d4d4d4;"></div>
<div style="left:2px;top:288px;width:28px;height:1px;background:#c6c6c6;"></div>
<div style="left:31px;top:288px;width:1289px;height:1px;background:#d4d4d4;"></div>
<div style="left:2px;top:310px;width:28px;height:1px;background:#c6c6c6;"></div>
<div style="left:31px;top:310px;width:1289px;height:1px;background:#d4d4d4;"></div>
<div style="left:2px;top:332px;width:28px;height:1px;background:#c6c6c6;"></div>
<div style="left:31px;top:332px;width:1289px;height:1px;background:#d4d4d4;"></div>
<div style="left:2px;top:354px;width:28px;height:1px;background:#c6c6c6;"></div>
<div style="left:31px;top:354px;width:1289px;height:1px;background:#d4d4d4;"></div>
<div style="left:2px;top:372px;width:28px;height:1px;background:#c6c6c6;"></div>
<div style="left:31px;top:372px;width:1289px;height:1px;background:#d4d4d4;"></div>
<div style="left:2px;top:394px;width:28px;height:1px;background:#c6c6c6;"></div>
<div style="left:31px;top:394px;width:1289px;height:1px;background:#d4d4d4;"></div>
<div style="left:2px;top:416px;width:28px;height:1px;background:#c6c6c6;"></div>
<div style="left:31px;top:416px;width:1289px;height:1px;background:#d4d4d4;"></div>
<div style="left:2px;top:434px;width:28px;height:1px;background:#c6c6c6;"></div>
<div style="left:31px;top:434px;width:1289px;height:1px;background:#d4d4d4;"></div>
<div style="left:2px;top:452px;width:28px;height:1px;background:#c6c6c6;"></div>
<div style="left:31px;top:452px;width:1289px;height:1px;background:#d4d4d4;"></div>
<div style="left:2px;top:470px;width:28px;height:1px;background:#c6c6c6;"></div>
<div style="left:31px;top:470px;width:1289px;height:1px;background:#d4d4d4;"></div>
<div style="left:2px;top:488px;width:28px;height:1px;background:#c6c6c6;"></div>
<div style="left:31px;top:488px;width:1289px;height:1px;background:#d4d4d4;"></div>
<div style="left:2px;top:506px;width:28px;height:1px;background:#c6c6c6;"></div>
<div style="left:31px;top:506px;width:1289px;height:1px;background:#d4d4d4;"></div>
<div style="left:2px;top:524px;width:28px;height:1px;background:#c6c6c6;"></div>
<div style="left:31px;top:524px;width:1289px;height:1px;background:#d4d4d4;"></div>
<div style="left:2px;top:542px;width:28px;height:1px;background:#c6c6c6;"></div>
<div style="left:31px;top:542px;width:1289px;height:1px;background:#d4d4d4;"></div>
<div style="left:2px;top:560px;width:28px;height:1px;background:#c6c6c6;"></div>
<div style="left:31px;top:560px;width:1289px;height:1px;background:#d4d4d4;"></div>
<div style="left:2px;top:578px;width:28px;height:1px;background:#c6c6c6;"></div>
<div style="left:31px;top:578px;width:1289px;height:1px;background:#d4d4d4;"></div>
<div style="left:2px;top:596px;width:28px;height:1px;background:#c6c6c6;"></div>
<div style="left:31px;top:596px;width:1289px;height:1px;background:#d4d4d4;"></div>
<div style="left:2px;top:614px;width:28px;height:1px;background:#c6c6c6;"></div>
<div style="left:31px;top:614px;width:1289px;height:1px;background:#d4d4d4;"></div>
<div style="left:2px;top:632px;width:28px;height:1px;background:#c6c6c6;"></div>
<div style="left:31px;top:632px;width:1289px;height:1px;background:#d4d4d4;"></div>
<div style="left:2px;top:650px;width:28px;height:1px;background:#c6c6c6;"></div>
<div style="left:31px;top:650px;width:1289px;height:1px;background:#d4d4d4;"></div>
<div style="left:2px;top:668px;width:28px;height:1px;background:#c6c6c6;"></div>
<div style="left:31px;top:668px;width:1289px;height:1px;background:#d4d4d4;"></div>
<div style="left:102px;top:223px;width:1px;height:453px;background:#d4d4d4;"></div>
<div style="left:222px;top:223px;width:1px;height:453px;background:#d4d4d4;"></div>
<div style="left:307px;top:223px;width:1px;height:453px;background:#d4d4d4;"></div>
<div style="left:405px;top:223px;width:1px;height:453px;background:#d4d4d4;"></div>
<div style="left:508px;top:223px;width:1px;height:453px;background:#d4d4d4;"></div>
<div style="left:630px;top:223px;width:1px;height:453px;background:#d4d4d4;"></div>
<div style="left:732px;top:223px;width:1px;height:453px;background:#d4d4d4;"></div>
<div style="left:852px;top:223px;width:1px;height:453px;background:#d4d4d4;"></div>
<div style="left:999px;top:223px;width:1px;height:453px;background:#d4d4d4;"></div>
<div style="left:1172px;top:223px;width:1px;height:453px;background:#d4d4d4;"></div>
<div style="left:1292px;top:223px;width:1px;height:453px;background:#d4d4d4;"></div>
<div style="left:1320px;top:223px;width:1px;height:453px;background:#d4d4d4;"></div>
<div class="hs" style="left:2px;top:225.5px;height:18px;line-height:18px;width:28px;text-align:center;">1</div>
<div class="hs" style="left:2px;top:247.5px;height:18px;line-height:18px;width:28px;text-align:center;">2</div>
<div class="hs" style="left:2px;top:269.5px;height:18px;line-height:18px;width:28px;text-align:center;">3</div>
<div class="hs" style="left:2px;top:291.5px;height:18px;line-height:18px;width:28px;text-align:center;">4</div>
<div class="hs" style="left:2px;top:313.5px;height:18px;line-height:18px;width:28px;text-align:center;">5</div>
<div class="hs" style="left:2px;top:335.5px;height:18px;line-height:18px;width:28px;text-align:center;">6</div>
<div class="hs" style="left:2px;top:355.5px;height:18px;line-height:18px;width:28px;text-align:center;">7</div>
<div class="hs" style="left:2px;top:375.5px;height:18px;line-height:18px;width:28px;text-align:center;">8</div>
<div class="hs" style="left:2px;top:397.5px;height:18px;line-height:18px;width:28px;text-align:center;">9</div>
<div class="hs" style="left:2px;top:417.5px;height:18px;line-height:18px;width:28px;text-align:center;">10</div>
<div class="hs" style="left:2px;top:435.5px;height:18px;line-height:18px;width:28px;text-align:center;">11</div>
<div class="hs" style="left:2px;top:453.5px;height:18px;line-height:18px;width:28px;text-align:center;">12</div>
<div class="hs" style="left:2px;top:471.5px;height:18px;line-height:18px;width:28px;text-align:center;">13</div>
<div class="hs" style="left:2px;top:489.5px;height:18px;line-height:18px;width:28px;text-align:center;color:#217346;">14</div>
<div class="hs" style="left:2px;top:507.5px;height:18px;line-height:18px;width:28px;text-align:center;">15</div>
<div class="hs" style="left:2px;top:525.5px;height:18px;line-height:18px;width:28px;text-align:center;">16</div>
<div class="hs" style="left:2px;top:543.5px;height:18px;line-height:18px;width:28px;text-align:center;">17</div>
<div class="hs" style="left:2px;top:561.5px;height:18px;line-height:18px;width:28px;text-align:center;">18</div>
<div class="hs" style="left:2px;top:579.5px;height:18px;line-height:18px;width:28px;text-align:center;">19</div>
<div class="hs" style="left:2px;top:597.5px;height:18px;line-height:18px;width:28px;text-align:center;">20</div>
<div class="hs" style="left:2px;top:615.5px;height:18px;line-height:18px;width:28px;text-align:center;">21</div>
<div class="hs" style="left:2px;top:633.5px;height:18px;line-height:18px;width:28px;text-align:center;">22</div>
<div class="hs" style="left:2px;top:651.5px;height:18px;line-height:18px;width:28px;text-align:center;">23</div>
<div style="left:2px;top:669px;width:28px;height:7px;overflow:hidden;"><div class="hs" style="left:1px;top:1px;width:28px;height:18px;line-height:18px;text-align:center;">24</div></div>
<div style="left:30px;top:222px;width:73px;height:23px;background:#ffff99;border:1px solid #000;overflow:hidden;"></div>
<svg style="left:44.25px;top:226.00px;" width="31.0" height="17.2" fill="#000"><text x="0" y="13.20" font-family="Liberation Sans, Noto Sans CJK SC, sans-serif" font-size="15" fill="#000000">角色</text></svg>
<svg style="left:74.25px;top:224.00px" width="17.5" height="20"><text x="0" y="15.37" font-family="Liberation Sans, sans-serif" font-size="15.5" fill="#000000" textLength="14.5" lengthAdjust="spacing">ID</text></svg>
<div style="left:102px;top:222px;width:121px;height:23px;background:#ffff99;border:1px solid #000;overflow:hidden;"></div>
<svg style="left:133.00px;top:226.00px;" width="61.0" height="17.2" fill="#000"><text x="0" y="13.20" font-family="Liberation Sans, Noto Sans CJK SC, sans-serif" font-size="15" fill="#000000">解锁关卡</text></svg>
<div style="left:222px;top:222px;width:86px;height:23px;background:#ffff99;border:1px solid #000;overflow:hidden;"></div>
<svg style="left:235.50px;top:226.00px;" width="61.0" height="17.2" fill="#000"><text x="0" y="13.20" font-family="Liberation Sans, Noto Sans CJK SC, sans-serif" font-size="15" fill="#000000">货币类别</text></svg>
<div style="left:307px;top:222px;width:99px;height:23px;background:#ffff99;border:1px solid #000;overflow:hidden;"></div>
<svg style="left:334.50px;top:226.00px;" width="46.0" height="17.2" fill="#000"><text x="0" y="13.20" font-family="Liberation Sans, Noto Sans CJK SC, sans-serif" font-size="15" fill="#000000">消耗值</text></svg>
<div style="left:405px;top:222px;width:104px;height:23px;background:#ffff99;border:1px solid #000;overflow:hidden;"></div>
<svg style="left:442.50px;top:226.00px;" width="31.0" height="17.2" fill="#000"><text x="0" y="13.20" font-family="Liberation Sans, Noto Sans CJK SC, sans-serif" font-size="15" fill="#000000">名称</text></svg>
<div style="left:508px;top:222px;width:123px;height:23px;background:#ffff99;border:1px solid #000;overflow:hidden;"></div>
<svg style="left:555.00px;top:226.00px;" width="31.0" height="17.2" fill="#000"><text x="0" y="13.20" font-family="Liberation Sans, Noto Sans CJK SC, sans-serif" font-size="15" fill="#000000">描述</text></svg>
<div style="left:30px;top:244px;width:73px;height:23px;background:#ffff99;border:1px solid #000;overflow:hidden;"></div>
<svg style="left:56.10px;top:245.50px" width="23.8" height="20"><text x="0" y="15.54" font-family="Liberation Sans, sans-serif" font-size="16" fill="#000000" textLength="20.8" lengthAdjust="spacing">0Id</text></svg>
<div style="left:102px;top:244px;width:121px;height:23px;background:#ffff99;border:1px solid #000;overflow:hidden;"></div>
<svg style="left:114.95px;top:245.50px" width="98.1" height="20"><text x="0" y="15.54" font-family="Liberation Sans, sans-serif" font-size="16" fill="#000000" textLength="95.1" lengthAdjust="spacing">0UnlockLevel</text></svg>
<div style="left:222px;top:244px;width:86px;height:23px;background:#ffff99;border:1px solid #000;overflow:hidden;"></div>
<svg style="left:226.80px;top:245.50px" width="79.4" height="20"><text x="0" y="15.54" font-family="Liberation Sans, sans-serif" font-size="16" fill="#000000" textLength="76.4" lengthAdjust="spacing">0CostType</text></svg>
<div style="left:307px;top:244px;width:99px;height:23px;background:#ffff99;border:1px solid #000;overflow:hidden;"></div>
<svg style="left:316.05px;top:245.50px" width="83.9" height="20"><text x="0" y="15.54" font-family="Liberation Sans, sans-serif" font-size="16" fill="#000000" textLength="80.9" lengthAdjust="spacing">0CostValue</text></svg>
<div style="left:405px;top:244px;width:104px;height:23px;background:#ffff99;border:1px solid #000;overflow:hidden;"></div>
<svg style="left:431.85px;top:245.50px" width="53.3" height="20"><text x="0" y="15.54" font-family="Liberation Sans, sans-serif" font-size="16" fill="#000000" textLength="50.3" lengthAdjust="spacing">0Name</text></svg>
<div style="left:508px;top:244px;width:123px;height:23px;background:#ffff99;border:1px solid #000;overflow:hidden;"></div>
<svg style="left:523.30px;top:245.50px" width="95.4" height="20"><text x="0" y="15.54" font-family="Liberation Sans, sans-serif" font-size="16" fill="#000000" textLength="92.4" lengthAdjust="spacing">0Description</text></svg>
<div style="left:30px;top:266px;width:73px;height:23px;border:1px solid #000;"></div>
<div style="left:102px;top:266px;width:121px;height:23px;border:1px solid #000;"></div>
<div style="left:222px;top:266px;width:86px;height:23px;border:1px solid #000;"></div>
<div style="left:307px;top:266px;width:99px;height:23px;border:1px solid #000;"></div>
<div style="left:405px;top:266px;width:104px;height:23px;border:1px solid #000;"></div>
<div style="left:508px;top:266px;width:123px;height:23px;border:1px solid #000;"></div>
<div style="left:30px;top:288px;width:73px;height:23px;border:1px solid #000;"></div>
<div style="left:102px;top:288px;width:121px;height:23px;border:1px solid #000;"></div>
<div style="left:222px;top:288px;width:86px;height:23px;border:1px solid #000;"></div>
<div style="left:307px;top:288px;width:99px;height:23px;border:1px solid #000;"></div>
<div style="left:405px;top:288px;width:104px;height:23px;border:1px solid #000;"></div>
<div style="left:508px;top:288px;width:123px;height:23px;border:1px solid #000;"></div>
<div style="left:30px;top:310px;width:73px;height:23px;border:1px solid #000;"></div>
<div style="left:102px;top:310px;width:121px;height:23px;border:1px solid #000;"></div>
<div style="left:222px;top:310px;width:86px;height:23px;border:1px solid #000;"></div>
<div style="left:307px;top:310px;width:99px;height:23px;border:1px solid #000;"></div>
<div style="left:405px;top:310px;width:104px;height:23px;border:1px solid #000;"></div>
<div style="left:508px;top:310px;width:123px;height:23px;border:1px solid #000;"></div>
<div style="left:30px;top:332px;width:73px;height:23px;border:1px solid #000;"></div>
<div style="left:102px;top:332px;width:121px;height:23px;border:1px solid #000;"></div>
<div style="left:222px;top:332px;width:86px;height:23px;border:1px solid #000;"></div>
<div style="left:307px;top:332px;width:99px;height:23px;border:1px solid #000;"></div>
<div style="left:405px;top:332px;width:104px;height:23px;border:1px solid #000;"></div>
<div style="left:508px;top:332px;width:123px;height:23px;border:1px solid #000;"></div>
<div style="left:30px;top:372px;width:73px;height:23px;border:1px solid #000;"></div>
<div style="left:102px;top:372px;width:121px;height:23px;border:1px solid #000;"></div>
<div style="left:222px;top:372px;width:86px;height:23px;border:1px solid #000;"></div>
<div style="left:307px;top:372px;width:99px;height:23px;border:1px solid #000;"></div>
<div style="left:405px;top:372px;width:104px;height:23px;border:1px solid #000;"></div>
<div style="left:508px;top:372px;width:123px;height:23px;border:1px solid #000;"></div>
<div style="left:30px;top:394px;width:73px;height:23px;border:1px solid #000;"></div>
<div style="left:102px;top:394px;width:121px;height:23px;border:1px solid #000;"></div>
<div style="left:222px;top:394px;width:86px;height:23px;border:1px solid #000;"></div>
<div style="left:307px;top:394px;width:99px;height:23px;border:1px solid #000;"></div>
<div style="left:405px;top:394px;width:104px;height:23px;border:1px solid #000;"></div>
<div style="left:508px;top:394px;width:123px;height:23px;border:1px solid #000;"></div>
<div class="ds" style="left:30px;top:270.0px;height:18px;line-height:18px;width:69px;text-align:right;"><i class="d">1</i><i class="d">0</i><i class="d">0</i><i class="d">0</i><i class="d">1</i></div>
<div class="ds" style="left:30px;top:292.0px;height:18px;line-height:18px;width:69px;text-align:right;"><i class="d">1</i><i class="d">0</i><i class="d">0</i><i class="d">0</i><i class="d">2</i></div>
<div class="ds" style="left:30px;top:314.0px;height:18px;line-height:18px;width:69px;text-align:right;"><i class="d">1</i><i class="d">0</i><i class="d">0</i><i class="d">0</i><i class="d">3</i></div>
<div class="ds" style="left:30px;top:336.0px;height:18px;line-height:18px;width:69px;text-align:right;"><i class="d">1</i><i class="d">0</i><i class="d">0</i><i class="d">0</i><i class="d">4</i></div>
<div class="ds" style="left:30px;top:376.0px;height:18px;line-height:18px;width:69px;text-align:right;"><i class="d">1</i><i class="d">0</i><i class="d">0</i><i class="d">0</i><i class="d">5</i></div>
<div class="ds" style="left:30px;top:398.0px;height:18px;line-height:18px;width:69px;text-align:right;"><i class="d">1</i><i class="d">0</i><i class="d">0</i><i class="d">0</i><i class="d">6</i></div>
<div class="ds" style="left:307px;top:270.0px;height:18px;line-height:18px;width:98px;text-align:center;color:#2a4b8d;">1</div>
<svg style="left:408.00px;top:271.17px;" width="45.0" height="16.9" fill="#000"><text x="0" y="12.91" font-family="Liberation Serif, Noto Serif CJK SC, serif" font-size="14.67" fill="#000000">欧若拉</text></svg>
<svg style="left:511.00px;top:271.17px;" width="45.0" height="16.9" fill="#000"><text x="0" y="12.91" font-family="Liberation Serif, Noto Serif CJK SC, serif" font-size="14.67" fill="#000000">小魔女</text></svg>
<svg style="left:511.00px;top:293.17px;" width="59.7" height="16.9" fill="#000"><text x="0" y="12.91" font-family="Liberation Serif, Noto Serif CJK SC, serif" font-size="14.67" fill="#000000">海盗王子</text></svg>
<svg style="left:511.00px;top:315.17px;" width="45.0" height="16.9" fill="#000"><text x="0" y="12.91" font-family="Liberation Serif, Noto Serif CJK SC, serif" font-size="14.67" fill="#000000">喵少年</text></svg>
<svg style="left:511.00px;top:337.17px;" width="45.0" height="16.9" fill="#000"><text x="0" y="12.91" font-family="Liberation Serif, Noto Serif CJK SC, serif" font-size="14.67" fill="#000000">机器人</text></svg>
<svg style="left:511.00px;top:377.17px;" width="30.3" height="16.9" fill="#000"><text x="0" y="12.91" font-family="Liberation Serif, Noto Serif CJK SC, serif" font-size="14.67" fill="#000000">公主</text></svg>
<svg style="left:511.00px;top:399.17px;" width="30.3" height="16.9" fill="#000"><text x="0" y="12.91" font-family="Liberation Serif, Noto Serif CJK SC, serif" font-size="14.67" fill="#000000">骑士</text></svg>
<div class="m" style="left:633px;top:249.5px;height:18px;line-height:18px;">dep_test.id</div>
<div class="m" style="left:735px;top:249.5px;height:18px;line-height:18px;">dep_test.name</div>
<div class="m" style="left:855px;top:249.5px;height:18px;line-height:18px;">dep_test.dep2.id</div>
<div class="m" style="left:1002px;top:249.5px;height:18px;line-height:18px;">dep_test.dep2.level</div>
<div class="m" style="left:1175px;top:249.5px;height:18px;line-height:18px;">test_array[0]</div>
<div style="left:1292px;top:245px;width:28px;height:21px;overflow:hidden;"><div class="m" style="left:4px;top:5.500px;height:16px;line-height:16px;">test_array[1]</div></div>
<div class="ds" style="left:630px;top:270.0px;height:18px;line-height:18px;width:99px;text-align:right;"><i class="d">5</i><i class="d">1</i></div>
<div class="ds" style="left:732px;top:270.0px;height:18px;line-height:18px;width:117px;text-align:right;"><i class="d">1</i><i class="d">2</i><i class="d">3</i></div>
<div class="ds" style="left:852px;top:270.0px;height:18px;line-height:18px;width:144px;text-align:right;"><i class="d">1</i><i class="d">0</i><i class="d">1</i></div>
<div class="ds" style="left:999px;top:270.0px;height:18px;line-height:18px;width:170px;text-align:right;"><i class="d">2</i><i class="d">0</i><i class="d">1</i><i class="d">4</i><i class="d">/</i><i class="d">1</i><i class="d">0</i><i class="d">/</i><i class="d">1</i><i class="d">3</i></div>
<div class="m" style="left:1175px;top:271.5px;height:18px;line-height:18px;">lalal</div>
<div style="left:1292px;top:267px;width:27px;height:21px;overflow:hidden;"><svg style="left:3.00px;top:4.17px;" width="30.3" height="16.9" fill="#000"><text x="0" y="12.91" font-family="Liberation Serif, Noto Serif CJK SC, serif" font-size="14.67" fill="#000000">欧若</text></svg></div>
<div class="ds" style="left:630px;top:292.0px;height:18px;line-height:18px;width:99px;text-align:right;"><i class="d">6</i><i class="d">1</i></div>
<div class="ds" style="left:732px;top:292.0px;height:18px;line-height:18px;width:117px;text-align:right;"><i class="d">6</i><i class="d">5</i><i class="d">4</i></div>
<div class="ds" style="left:852px;top:292.0px;height:18px;line-height:18px;width:144px;text-align:right;"><i class="d">2</i><i class="d">0</i><i class="d">1</i></div>
<div class="ds" style="left:999px;top:292.0px;height:18px;line-height:18px;width:170px;text-align:right;"><i class="d">2</i><i class="d">0</i><i class="d">1</i><i class="d">4</i><i class="d">/</i><i class="d">1</i><i class="d">0</i><i class="d">/</i><i class="d">1</i><i class="d">4</i></div>
<div class="m" style="left:1175px;top:293.5px;height:18px;line-height:18px;">blebleble</div>
<div style="left:1292px;top:289px;width:27px;height:21px;overflow:hidden;"><svg style="left:3.00px;top:4.17px;" width="30.3" height="16.9" fill="#000"><text x="0" y="12.91" font-family="Liberation Serif, Noto Serif CJK SC, serif" font-size="14.67" fill="#000000">杰克</text></svg></div>
<div class="ds" style="left:630px;top:314.0px;height:18px;line-height:18px;width:99px;text-align:right;"><i class="d">7</i><i class="d">1</i></div>
<div class="m" style="left:735px;top:315.5px;height:18px;line-height:18px;">sdadasd</div>
<div class="ds" style="left:852px;top:314.0px;height:18px;line-height:18px;width:144px;text-align:right;"><i class="d">3</i><i class="d">0</i><i class="d">1</i></div>
<div class="ds" style="left:999px;top:314.0px;height:18px;line-height:18px;width:170px;text-align:right;"><i class="d">2</i><i class="d">0</i><i class="d">1</i><i class="d">4</i><i class="d">/</i><i class="d">1</i><i class="d">0</i><i class="d">/</i><i class="d">1</i><i class="d">5</i></div>
<div class="m" style="left:1175px;top:315.5px;height:18px;line-height:18px;">hahaha</div>
<div style="left:1292px;top:311px;width:27px;height:21px;overflow:hidden;"><svg style="left:3.00px;top:4.17px;" width="30.3" height="16.9" fill="#000"><text x="0" y="12.91" font-family="Liberation Serif, Noto Serif CJK SC, serif" font-size="14.67" fill="#000000">库拉</text></svg></div>
<div class="ds" style="left:630px;top:336.0px;height:18px;line-height:18px;width:99px;text-align:right;"><i class="d">8</i><i class="d">1</i></div>
<div class="m" style="left:735px;top:337.5px;height:18px;line-height:18px;">ffff</div>
<div class="ds" style="left:852px;top:336.0px;height:18px;line-height:18px;width:144px;text-align:right;"><i class="d">4</i><i class="d">0</i><i class="d">1</i></div>
<div class="ds" style="left:999px;top:336.0px;height:18px;line-height:18px;width:170px;text-align:right;"><i class="d">1</i><i class="d">9</i><i class="d">:</i><i class="d">1</i><i class="d">0</i><i class="d">:</i><i class="d">5</i><i class="d">0</i></div>
<div class="m" style="left:1175px;top:337.5px;height:18px;line-height:18px;">angel</div>
<div style="left:1292px;top:333px;width:27px;height:21px;overflow:hidden;"><svg style="left:3.00px;top:4.17px;" width="30.3" height="16.9" fill="#000"><text x="0" y="12.91" font-family="Liberation Serif, Noto Serif CJK SC, serif" font-size="14.67" fill="#000000">莫瑞</text></svg></div>
<div class="ds" style="left:630px;top:376.0px;height:18px;line-height:18px;width:99px;text-align:right;"><i class="d">9</i><i class="d">1</i></div>
<div class="m" style="left:735px;top:377.5px;height:18px;line-height:18px;">gggg</div>
<div class="ds" style="left:852px;top:376.0px;height:18px;line-height:18px;width:144px;text-align:right;"><i class="d">5</i><i class="d">0</i><i class="d">1</i></div>
<div class="ds" style="left:999px;top:376.0px;height:18px;line-height:18px;width:170px;text-align:right;"><i class="d">9</i><i class="d">:</i><i class="d">1</i><i class="d">0</i><i class="d">:</i><i class="d">5</i><i class="d">0</i><i class="d"> </i><i class="d" style="font-family:'Liberation Mono',monospace;font-size:13.333px;position:relative;top:0.500px">A</i><i class="d" style="font-family:'Liberation Mono',monospace;font-size:13.333px;position:relative;top:0.500px">M</i></div>
<div class="m" style="left:1175px;top:377.5px;height:18px;line-height:18px;">laopo</div>
<div style="left:1292px;top:373px;width:27px;height:21px;overflow:hidden;"><svg style="left:3.00px;top:4.17px;" width="30.3" height="16.9" fill="#000"><text x="0" y="12.91" font-family="Liberation Serif, Noto Serif CJK SC, serif" font-size="14.67" fill="#000000">爱丽</text></svg></div>
<div class="ds" style="left:630px;top:398.0px;height:18px;line-height:18px;width:99px;text-align:right;"><i class="d">1</i><i class="d">0</i><i class="d">1</i></div>
<div class="m" style="left:735px;top:399.5px;height:18px;line-height:18px;">hhhhh</div>
<div class="ds" style="left:852px;top:398.0px;height:18px;line-height:18px;width:144px;text-align:right;"><i class="d">6</i><i class="d">0</i><i class="d">1</i></div>
<div class="ds" style="left:999px;top:398.0px;height:18px;line-height:18px;width:170px;text-align:right;"><i class="d">2</i><i class="d">0</i><i class="d">1</i><i class="d">4</i><i class="d">-</i><i class="d">1</i><i class="d">0</i><i class="d">-</i><i class="d">2</i><i class="d">0</i><i class="d"> </i><i class="d">1</i><i class="d">9</i><i class="d">:</i><i class="d">5</i><i class="d">0</i><i class="d">:</i><i class="d">5</i><i class="d">0</i></div>
<div class="m" style="left:1175px;top:399.5px;height:18px;line-height:18px;">keai</div>
<div style="left:1292px;top:395px;width:27px;height:21px;overflow:hidden;"><svg style="left:3.00px;top:4.17px;" width="30.3" height="16.9" fill="#000"><text x="0" y="12.91" font-family="Liberation Serif, Noto Serif CJK SC, serif" font-size="14.67" fill="#000000">都玛</text></svg></div>
<div style="left:851px;top:487px;width:150px;height:21px;border:2px solid #217346;"></div>
<div style="left:1320px;top:205px;width:20px;height:471px;background:#e6e6e6;"></div>
<div style="left:1323px;top:207px;width:15px;height:469px;background:#dcdcdc;"></div>
<div style="left:1323px;top:221px;width:15px;height:421px;background:#fff;border:1px solid #ababab;"></div>
<div style="left:1323px;top:207px;width:15px;height:15px;background:#fff;border:1px solid #ababab;"></div>
<svg style="left:1326px;top:211px" width="9" height="6"><path d="M0 5.500 h9 l-4.500 -5z" fill="#777"/></svg>
<div style="left:1323px;top:662px;width:15px;height:15px;background:#fff;border:1px solid #ababab;"></div>
<svg style="left:1326px;top:667px" width="9" height="6"><path d="M0 0 h9 l-4.500 5z" fill="#555"/></svg>
<div style="left:1319px;top:223px;width:1px;height:453px;background:#a6a6a6;"></div>
<div style="left:608px;top:234px;width:238px;height:204px;border:3px solid #8b0a1e;z-index:5;"></div>
<div style="left:851px;top:237px;width:335px;height:204px;border:3px solid #8b0a1e;z-index:5;"></div>
<svg style="left:630px;top:265px;z-index:5" width="220" height="14" fill="none"><path d="M4 7.500 C60 6.500 150 8.500 210 7" stroke="#8b0a1e" stroke-width="3" stroke-linecap="round"/></svg>
<svg style="left:685px;top:440px;z-index:5" width="34" height="26"><path d="M16.500 3 L31 12.500 H24 V24 H9 V12.500 H2z" fill="#8b0a1e"/></svg>
<svg style="left:1055px;top:446px;z-index:5" width="36" height="34"><path d="M17.700 3.300 L33 17 H25 V31 H10 V17 H2z" fill="#8b0a1e"/></svg>
<div style="left:81px;top:283px;width:424px;height:277px;background:#1e1e1e;overflow:hidden;z-index:10;"><div style="left:37.5px;top:0.0px;width:424px;height:19px;border:1.500px solid #2f2f2f;background:#1b1b1b;"></div><div style="left:38.0px;top:95.0px;width:1px;height:152.0px;background:#3c3c3c;"></div><div class="ln" style="left:-29px;width:40px;top:1.0px;height:18px;line-height:18px;">1</div><div class="c" style="left:38.5px;top:1.0px;height:18px;line-height:18px;"><i class="k">syntax</i> = <i class="s">&quot;proto3&quot;</i>;</div><div class="ln" style="left:-29px;width:40px;top:20.0px;height:18px;line-height:18px;">2</div><div class="ln" style="left:-29px;width:40px;top:39.0px;height:18px;line-height:18px;">3</div><div class="c" style="left:38.5px;top:39.0px;height:18px;line-height:18px;"><i class="k">import</i> <i class="s">&quot;dependency.proto&quot;</i>;</div><div class="ln" style="left:-29px;width:40px;top:58.0px;height:18px;line-height:18px;">4</div><div class="ln" style="left:-29px;width:40px;top:77.0px;height:18px;line-height:18px;">5</div><div class="c" style="left:38.5px;top:77.0px;height:18px;line-height:18px;"><i class="k">message</i> <i class="ty">role_cfg</i> <i class="b">{</i></div><div class="ln" style="left:-29px;width:40px;top:96.0px;height:18px;line-height:18px;">6</div><div class="c" style="left:55.120000000000005px;top:96.0px;height:18px;line-height:18px;"><i class="k">uint32</i> <i class="v">id</i> = <i class="n">1</i>;</div><div class="ln" style="left:-29px;width:40px;top:115.0px;height:18px;line-height:18px;">7</div><div class="c" style="left:55.120000000000005px;top:115.0px;height:18px;line-height:18px;"><i class="k">uint32</i> <i class="v">unlock_level</i> = <i class="n">2</i>;</div><div class="ln" style="left:-29px;width:40px;top:134.0px;height:18px;line-height:18px;">8</div><div class="c" style="left:55.120000000000005px;top:134.0px;height:18px;line-height:18px;"><i class="k">uint32</i> <i class="v">cost_type</i> = <i class="n">3</i>;</div><div class="ln" style="left:-29px;width:40px;top:153.0px;height:18px;line-height:18px;">9</div><div class="c" style="left:55.120000000000005px;top:153.0px;height:18px;line-height:18px;"><i class="k">int32</i> <i class="v">cost_value</i> = <i class="n">4</i>;</div><div class="ln" style="left:-29px;width:40px;top:172.0px;height:18px;line-height:18px;">0</div><div class="c" style="left:55.120000000000005px;top:172.0px;height:18px;line-height:18px;"><i class="k">string</i> <i class="v">name</i> = <i class="n">5</i>;</div><div class="ln" style="left:-29px;width:40px;top:191.0px;height:18px;line-height:18px;">1</div><div class="c" style="left:55.120000000000005px;top:191.0px;height:18px;line-height:18px;"><i class="k">dep_cfg</i> <i class="v">dep_test</i> = <i class="n">10</i>;</div><div class="ln" style="left:-29px;width:40px;top:210.0px;height:18px;line-height:18px;">2</div><div class="ln" style="left:-29px;width:40px;top:229.0px;height:18px;line-height:18px;">3</div><div class="c" style="left:55.120000000000005px;top:229.0px;height:18px;line-height:18px;"><i class="k">repeated</i> <i class="k">string</i> <i class="v">test_array</i> = <i class="n">11</i>;</div><div class="ln" style="left:-29px;width:40px;top:248.0px;height:18px;line-height:18px;">4</div><div class="c" style="left:38.5px;top:248.0px;height:18px;line-height:18px;"><i class="b">}</i></div><div class="ln" style="left:-29px;width:40px;top:267.0px;height:18px;line-height:18px;">5</div><div style="left:22.5px;top:81.5px;width:9px;height:9px;border:1px solid #6e6e6e;"></div><div style="left:24.5px;top:85.5px;width:5px;height:1px;background:#a8a8a8;"></div><div style="left:52px;top:209px;width:185px;height:3px;border-radius:2px;background:#8b0a1e;"></div></div>
<div style="left:511px;top:463px;width:347px;height:200px;background:#1e1e1e;overflow:hidden;z-index:10;"><div style="left:0;top:0;width:347px;height:6px;background:#2d2d2d;"></div><div style="left:42.60000000000002px;top:6.0px;width:347px;height:19px;border:1.500px solid #2f2f2f;background:#1b1b1b;"></div><div style="left:43.60000000000002px;top:101.0px;width:1px;height:57.0px;background:#3c3c3c;"></div><div class="ln" style="left:-24px;width:40px;top:7.0px;height:18px;line-height:18px;">1</div><div class="c" style="left:43.60000000000002px;top:7.0px;height:18px;line-height:18px;"><i class="k">syntax</i> = <i class="s">&quot;proto3&quot;</i>;</div><div class="ln" style="left:-24px;width:40px;top:26.0px;height:18px;line-height:18px;">2</div><div class="ln" style="left:-24px;width:40px;top:45.0px;height:18px;line-height:18px;">3</div><div class="c" style="left:43.60000000000002px;top:45.0px;height:18px;line-height:18px;"><i class="k">import</i> <i class="s">&quot;dep_level2.proto&quot;</i>;</div><div class="ln" style="left:-24px;width:40px;top:64.0px;height:18px;line-height:18px;">4</div><div class="ln" style="left:-24px;width:40px;top:83.0px;height:18px;line-height:18px;">5</div><div class="c" style="left:43.60000000000002px;top:83.0px;height:18px;line-height:18px;"><i class="k">message</i> <i class="ty">dep_cfg</i> <i class="b">{</i></div><div class="ln" style="left:-24px;width:40px;top:102.0px;height:18px;line-height:18px;">6</div><div class="c" style="left:76.84000000000003px;top:102.0px;height:18px;line-height:18px;"><i class="k">uint32</i> <i class="v">id</i> = <i class="n">1</i>;</div><div class="ln" style="left:-24px;width:40px;top:121.0px;height:18px;line-height:18px;">7</div><div class="c" style="left:76.84000000000003px;top:121.0px;height:18px;line-height:18px;"><i class="k">string</i> <i class="v">name</i> = <i class="n">2</i>;</div><div class="ln" style="left:-24px;width:40px;top:140.0px;height:18px;line-height:18px;">8</div><div class="c" style="left:76.84000000000003px;top:140.0px;height:18px;line-height:18px;"><i class="k">dep2_cfg</i> <i class="v">dep2</i> = <i class="n">3</i>;</div><div class="ln" style="left:-24px;width:40px;top:159.0px;height:18px;line-height:18px;">9</div><div class="c" style="left:43.60000000000002px;top:159.0px;height:18px;line-height:18px;"><i class="b">}</i></div><div class="ln" style="left:-24px;width:40px;top:178.0px;height:18px;line-height:18px;">10</div><div class="ln" style="left:-24px;width:40px;top:197.0px;height:18px;line-height:18px;">11</div><div style="left:28.0px;top:87.5px;width:9px;height:9px;border:1px solid #6e6e6e;"></div><div style="left:30.0px;top:91.5px;width:5px;height:1px;background:#a8a8a8;"></div><div style="left:75px;top:119px;width:128px;height:3px;border-radius:2px;background:#8b0a1e;"></div><div style="left:75px;top:136px;width:140px;height:3px;border-radius:2px;background:#8b0a1e;"></div><div style="left:191px;top:0;width:1px;height:6px;background:#3a3a3a;"></div><svg style="left:70.00px;top:197.75px;" width="55.0" height="15.5" fill="#8a8a3a"><text x="0" y="11.88" font-family="Liberation Serif, Noto Serif CJK SC, serif" font-size="13.5" fill="#8a8a3a">类型类型</text></svg></div>
<div style="left:930px;top:485px;width:256px;height:153px;background:#1e1e1e;overflow:hidden;z-index:10;"><div style="left:0;top:0;width:256px;height:9px;background:#2d2d2d;"></div><div style="left:71.29999999999995px;top:123.0px;width:256px;height:19px;border:1.500px solid #2f2f2f;background:#1b1b1b;"></div><div style="left:72.29999999999995px;top:66.0px;width:1px;height:38.0px;background:#3c3c3c;"></div><div class="ln" style="left:5px;width:40px;top:10.0px;height:18px;line-height:18px;">1</div><div class="c" style="left:72.29999999999995px;top:10.0px;height:18px;line-height:18px;"><i class="k">syntax</i> = <i class="s">&quot;proto3&quot;</i>;</div><div class="ln" style="left:5px;width:40px;top:29.0px;height:18px;line-height:18px;">2</div><div class="ln" style="left:5px;width:40px;top:48.0px;height:18px;line-height:18px;">3</div><div class="c" style="left:72.29999999999995px;top:48.0px;height:18px;line-height:18px;"><i class="k">message</i> <i class="ty">dep2_cfg</i> <i class="b">{</i></div><div class="ln" style="left:5px;width:40px;top:67.0px;height:18px;line-height:18px;">4</div><div class="c" style="left:105.53999999999996px;top:67.0px;height:18px;line-height:18px;"><i class="k">uint32</i> <i class="v">id</i> = <i class="n">1</i>;</div><div class="ln" style="left:5px;width:40px;top:86.0px;height:18px;line-height:18px;">5</div><div class="c" style="left:105.53999999999996px;top:86.0px;height:18px;line-height:18px;"><i class="k">string</i> <i class="v">level</i> = <i class="n">2</i>;</div><div class="ln" style="left:5px;width:40px;top:105.0px;height:18px;line-height:18px;">6</div><div class="c" style="left:72.29999999999995px;top:105.0px;height:18px;line-height:18px;"><i class="b">}</i></div><div class="ln" style="left:5px;width:40px;top:124.0px;height:18px;line-height:18px;">7</div><div style="left:100px;top:83.5px;width:125px;height:3px;border-radius:2px;background:#8b0a1e;"></div><div style="left:103px;top:105px;width:143px;height:3px;border-radius:2px;background:#8b0a1e;"></div><div style="left:221px;top:0;width:1px;height:9px;background:#3a3a3a;"></div></div>
<div style="left:2px;top:676px;width:1338px;height:28px;background:#e6e6e6;border-top:1px solid #b4b4b4;"></div>
<svg style="left:28px;top:684px" width="40" height="12"><path d="M5.500 2 v7.500 l-4.500 -3.750z" fill="#217346"/><path d="M31 2 v7.500 l4.500 -3.750z" fill="#bdbdbd"/></svg>
<div class="t" style="left:81px;top:681.0px;height:16px;line-height:16px;color:#217346;font-weight:bold;font-size:14px;">...</div>
<div style="left:102px;top:676px;width:52px;height:24px;background:#fff;border-left:1px solid #b4b4b4;border-right:1px solid #b4b4b4;border-bottom:2px solid #217346;"></div>
<svg style="left:115.00px;top:678.50px" width="26.0" height="20"><text x="0" y="14.50" font-family="Liberation Sans, sans-serif" font-size="13" fill="#217346" textLength="23.0" lengthAdjust="spacing">kind</text></svg>
<svg style="left:166.00px;top:678.50px" width="101.0" height="20"><text x="0" y="14.50" font-family="Liberation Sans, sans-serif" font-size="13" fill="#444444" textLength="98.0" lengthAdjust="spacing">scheme_upgrade</text></svg>
<div style="left:279px;top:681px;width:1px;height:17px;background:#ababab;"></div>
<svg style="left:290.80px;top:678.50px" width="92.2" height="20"><text x="0" y="14.50" font-family="Liberation Sans, sans-serif" font-size="13" fill="#444444" textLength="89.2" lengthAdjust="spacing">upgrade_10001</text></svg>
<div style="left:394px;top:681px;width:1px;height:17px;background:#ababab;"></div>
<svg style="left:406.10px;top:678.50px" width="92.5" height="20"><text x="0" y="14.50" font-family="Liberation Sans, sans-serif" font-size="13" fill="#444444" textLength="89.5" lengthAdjust="spacing">upgrade_10002</text></svg>
<div style="left:509px;top:681px;width:1px;height:17px;background:#ababab;"></div>
<svg style="left:520.90px;top:678.50px" width="39.6" height="20"><text x="0" y="14.50" font-family="Liberation Sans, sans-serif" font-size="13" fill="#444444" textLength="36.6" lengthAdjust="spacing">macro</text></svg>
<div style="left:571px;top:681px;width:1px;height:17px;background:#ababab;"></div>
<svg style="left:583.70px;top:678.50px" width="56.8" height="20"><text x="0" y="14.50" font-family="Liberation Sans, sans-serif" font-size="13" fill="#444444" textLength="53.8" lengthAdjust="spacing">arr_in_arr</text></svg>
<div style="left:650px;top:681px;width:1px;height:17px;background:#ababab;"></div>
<svg style="left:683px;top:681px" width="18" height="18" fill="none" stroke="#666" stroke-width="1.200"><circle cx="9" cy="9" r="7.500"/><path d="M9 5 v8 M5 9 h8"/></svg>
<div style="left:805px;top:684px;width:2px;height:2px;background:#a6a6a6;"></div>
<div style="left:805px;top:689px;width:2px;height:2px;background:#a6a6a6;"></div>
<div style="left:805px;top:694px;width:2px;height:2px;background:#a6a6a6;"></div>
<div style="left:822px;top:683px;width:501px;height:15px;background:#dcdcdc;"></div>
<div style="left:822px;top:683px;width:15px;height:15px;background:#fff;border:1px solid #ababab;"></div>
<svg style="left:826px;top:686px" width="6" height="9"><path d="M5.500 0 v9 l-5 -4.500z" fill="#555"/></svg>
<div style="left:836px;top:683px;width:361px;height:15px;background:#fff;border:1px solid #ababab;"></div>
<div style="left:1307px;top:683px;width:15px;height:15px;background:#fff;border:1px solid #ababab;"></div>
<svg style="left:1312px;top:686px" width="6" height="9"><path d="M0.500 0 v9 l5 -4.500z" fill="#555"/></svg>
<div style="left:2px;top:704px;width:1338px;height:21px;background:#f3f3f3;border-top:1px solid #c6c6c6;"></div>
<svg style="left:9.50px;top:705.00px" width="33.5" height="20"><text x="0" y="13.98" font-family="Liberation Sans, sans-serif" font-size="11.5" fill="#444" textLength="30.5" lengthAdjust="spacing">Ready</text></svg>
<div style="left:1044px;top:705px;width:38px;height:20px;background:#c8c8c8;"></div>
<svg style="left:1054px;top:706px" width="100" height="17" fill="none" stroke="#666" stroke-width="1.100">
<rect x="2.500" y="2.500" width="12" height="12"/><path d="M2.500 6.500 h12 M2.500 10.500 h12 M6.500 2.500 v12 M10.500 2.500 v12"/>
<rect x="40.500" y="2.500" width="13" height="12"/><rect x="43.500" y="5.500" width="7" height="6.500"/><path d="M45 7.500 h4 M45 9.500 h4"/>
<path d="M78.500 2.500 h13 v12 h-13z M78.500 8.500 h7 v-6 M82 2.500 v6"/>
</svg>
<div style="left:1163px;top:714.5px;width:6px;height:2px;background:#555;"></div>
<div style="left:1174px;top:715px;width:100px;height:1px;background:#8a8a8a;"></div>
<div style="left:1221px;top:709px;width:5px;height:11px;background:#6a6a6a;"></div>
<div style="left:1276.5px;top:714.5px;width:7px;height:2px;background:#555;"></div>
<div style="left:1279px;top:712px;width:2px;height:7px;background:#555;"></div>
<svg style="left:1295.70px;top:704.50px" width="28.6" height="20"><text x="0" y="13.81" font-family="Liberation Sans, sans-serif" font-size="11" fill="#444" textLength="25.6" lengthAdjust="spacing">100%</text></svg>
</body></html>
